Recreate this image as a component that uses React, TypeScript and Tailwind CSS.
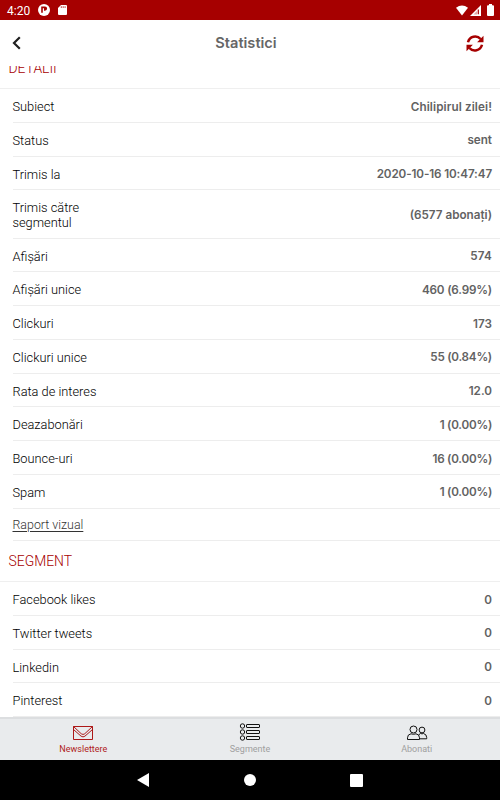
import React from "react";
import clsx from "clsx";

type StatRow = {
  label: string;
  value: string;
  tracking?: string;
  tall?: boolean;
};

const detailRows: StatRow[] = [
  { label: "Subiect", value: "Chilipirul zilei!", tracking: "tracking-[0.1px]" },
  { label: "Status", value: "sent" },
  { label: "Trimis la", value: "2020-10-16 10:47:47", tracking: "tracking-[-0.12px]" },
  { label: "Trimis către segmentul", value: "(6577 abonați)", tall: true },
  { label: "Afișări", value: "574", tracking: "tracking-[0.2px]" },
  { label: "Afișări unice", value: "460 (6.99%)", tracking: "tracking-[-0.18px]" },
  { label: "Clickuri", value: "173" },
  { label: "Clickuri unice", value: "55 (0.84%)", tracking: "tracking-[-0.25px]" },
  { label: "Rata de interes", value: "12.0" },
  { label: "Deazabonări", value: "1 (0.00%)", tracking: "tracking-[-0.25px]" },
  { label: "Bounce-uri", value: "16 (0.00%)", tracking: "tracking-[-0.25px]" },
  { label: "Spam", value: "1 (0.00%)", tracking: "tracking-[-0.25px]" },
];

const segmentRows: StatRow[] = [
  { label: "Facebook likes", value: "0" },
  { label: "Twitter tweets", value: "0" },
  { label: "Linkedin", value: "0" },
  { label: "Pinterest", value: "0" },
];

const Row: React.FC<StatRow> = ({ label, value, tracking, tall }) => (
  <li
    className={clsx(
      "ml-[12.5px] flex shrink-0 items-center justify-between border-b border-[#ededed] pr-2",
      tall ? "h-[48.3px]" : "h-[33.75px]",
    )}
  >
    <span
      className={clsx(
        "pt-1 text-[12.8px] leading-[14.5px] font-[350] text-black",
        tall ? "w-[80px]" : "whitespace-nowrap",
      )}
    >
      {label}
    </span>
    <span
      className={clsx(
        "font-['Inter','Liberation_Sans',sans-serif] text-[11.7px] font-semibold whitespace-nowrap text-[#626262]",
        tall ? "pt-[3px]" : "pt-1",
        tracking,
      )}
    >
      {value}
    </span>
  </li>
);

const SectionTitle: React.FC<{ title: string; className?: string }> = ({ title, className }) => (
  <h2
    className={clsx(
      "flex h-[41px] shrink-0 items-center border-b border-[#efefef] pl-[8.5px] text-[13.9px] font-[350] text-[#a60000]",
      className,
    )}
  >
    {title}
  </h2>
);

const StatusBar = () => (
  <div className="flex h-5 shrink-0 items-center bg-[#a60000] pr-1.5 pl-[7px] text-white">
    <span className="pt-px text-[12px] leading-5">4:20</span>
    <svg className="ml-[8px] h-3 w-3" viewBox="0 0 12 12">
      <circle cx="6" cy="6" r="6" fill="#fff" />
      <path d="M3.2 2.5h3.8a2.1 2.1 0 0 1 0 4.2H6V4.2H4.8v4.5H3.2z" fill="#a60000" />
    </svg>
    <svg className="ml-2 h-[10px] w-[9px]" viewBox="0 0 9 10">
      <path d="M3 0h5q1 0 1 1v8q0 1-1 1H1q-1 0-1-1V3z" fill="#fff" />
      <path d="M3.3 1.2v1.8M5.2 1.2v1.8M7.1 1.2v1.8" stroke="#a60000" strokeWidth=".7" />
    </svg>
    <svg className="ml-auto h-[11px] w-3" viewBox="0 0 12 11">
      <path d="M0 2.8Q6-1.6 12 2.8L6 10.5z" fill="#fff" />
    </svg>
    <svg className="ml-[2px] h-[11px] w-[11px]" viewBox="0 0 11 11">
      <path d="M0 11 11 0v11z" fill="#fff" />
      <path d="M8.3 4.5v4.7" stroke="#a60000" strokeWidth="1.2" />
      <path d="M3.5 9.5 7 6v3.5z" fill="#a60000" opacity=".35" />
    </svg>
    <svg className="ml-[6px] h-[12px] w-[7px]" viewBox="0 0 7 12">
      <path d="M2 0h3v1.3h1q1 0 1 1V11q0 1-1 1H1q-1 0-1-1V2.3q0-1 1-1h1z" fill="#fff" />
    </svg>
  </div>
);

const Header = () => (
  <header className="grid h-[46px] shrink-0 grid-cols-[1fr_auto_1fr] items-center pr-4 pl-3">
    <svg className="h-[14px] w-[9px]" viewBox="0 0 9 14" fill="none">
      <path d="M7.8 1.2 2 7l5.8 5.8" stroke="#202020" strokeWidth="2.2" />
    </svg>
    <h1 className="mr-1 pt-[2px] font-['Inter','Liberation_Sans',sans-serif] text-[14.6px] font-semibold text-[#666]">
      Statistici
    </h1>
    <svg className="h-[17px] w-[18px] justify-self-end" viewBox="0 0 18 17" fill="none">
      <path
        d="M2 7.2C3.5 1.2 10.8-.4 14.6 4M16 9.8C14.5 15.8 7.2 17.4 3.4 13"
        stroke="#a60000"
        strokeWidth="2.5"
      />
      <path d="M17.5 .8v6.4h-6.4zM.5 16.2V9.8h6.4z" fill="#a60000" />
    </svg>
  </header>
);

const MailIcon = () => (
  <svg className="h-4 w-[22px]" viewBox="0 0 22 16" fill="none" stroke="#a60000" strokeWidth=".9">
    <path d="M1.5 1.5h19v13h-19zM1.5 1.5l7.8 7.3q1.7 1.3 3.4 0l7.8-7.3M1.5 4.5l7.6 6.7q1.9 1.4 3.8 0l7.6-6.7" />
  </svg>
);

const ListIcon = () => (
  <svg className="h-[18px] w-[22px]" viewBox="0 0 22 18" fill="none" stroke="#111" strokeWidth="1">
    <circle cx="3.5" cy="3" r="2.2" />
    <circle cx="3.5" cy="9" r="2.2" />
    <circle cx="3.5" cy="15" r="2.2" />
    <rect x="7.5" y="1.5" width="13" height="3" rx=".5" />
    <rect x="7.5" y="7.5" width="13" height="3" rx=".5" />
    <rect x="7.5" y="13.5" width="13" height="3" rx=".5" />
  </svg>
);

const PeopleIcon = () => (
  <svg className="h-4 w-[22px]" viewBox="0 0 22 16" fill="none" stroke="#111" strokeWidth="1">
    <circle cx="7.5" cy="4.5" r="3.5" />
    <path d="M5 8.8q-3.5.5-3.5 4v1.7h12v-1.7q0-3.5-3.5-4-2.5 1-5 0z" />
    <circle cx="16" cy="5" r="2.9" />
    <path d="M12.5 10l2-1.5q1.5.7 3 0 3.2.8 3.2 4v1.3h-7" />
  </svg>
);

const tabs = [
  { name: "Newslettere", icon: <MailIcon />, active: true },
  { name: "Segmente", icon: <ListIcon />, active: false },
  { name: "Abonati", icon: <PeopleIcon />, active: false },
];

const App: React.FC = () => {
  return (
    <div className="flex h-[800px] w-[500px] flex-col overflow-hidden bg-white font-['Roboto','Liberation_Sans',sans-serif]">
      <StatusBar />
      <Header />
      <main className="flex min-h-0 flex-1 flex-col overflow-hidden">
        {/* list is scrolled a little, so the first title sits half under the header */}
        <SectionTitle title="DETALII" className="-mt-[18px]" />
        <ul className="flex flex-col">
          {detailRows.map((row) => (
            <Row key={row.label} {...row} />
          ))}
        </ul>
        <div className="ml-[12.5px] flex h-[32.5px] shrink-0 items-center border-b border-[#ededed] pt-[2px]">
          <a className="text-[12.4px] font-[350] text-[#333] underline underline-offset-2">
            Raport vizual
          </a>
        </div>
        <SectionTitle title="SEGMENT" />
        <ul className="flex flex-col">
          {segmentRows.map((row) => (
            <Row key={row.label} {...row} />
          ))}
        </ul>
      </main>
      <nav className="grid h-[43px] shrink-0 grid-cols-3 border-t-2 border-[#dcdee0] bg-[#e9ebed]">
        {tabs.map(({ name, icon, active }) => (
          <div key={name} className="flex flex-col items-center">
            <span className="flex h-[23px] items-end pb-px">{icon}</span>
            <span
              className={clsx(
                "pt-px text-[9px] leading-[13px]",
                active ? "text-[#b01b1b]" : "text-[#a0a0a0]",
              )}
            >
              {name}
            </span>
          </div>
        ))}
      </nav>
      <div className="flex h-10 shrink-0 items-center justify-between bg-black px-[137px]">
        <svg className="h-[14px] w-3" viewBox="0 0 12 14">
          <path d="M12 0v14L0 7z" fill="#fff" />
        </svg>
        <span className="h-3 w-3 rounded-full bg-white" />
        <span className="h-[13px] w-[13px] rounded-[1px] bg-white" />
      </div>
    </div>
  );
};

export default App;
